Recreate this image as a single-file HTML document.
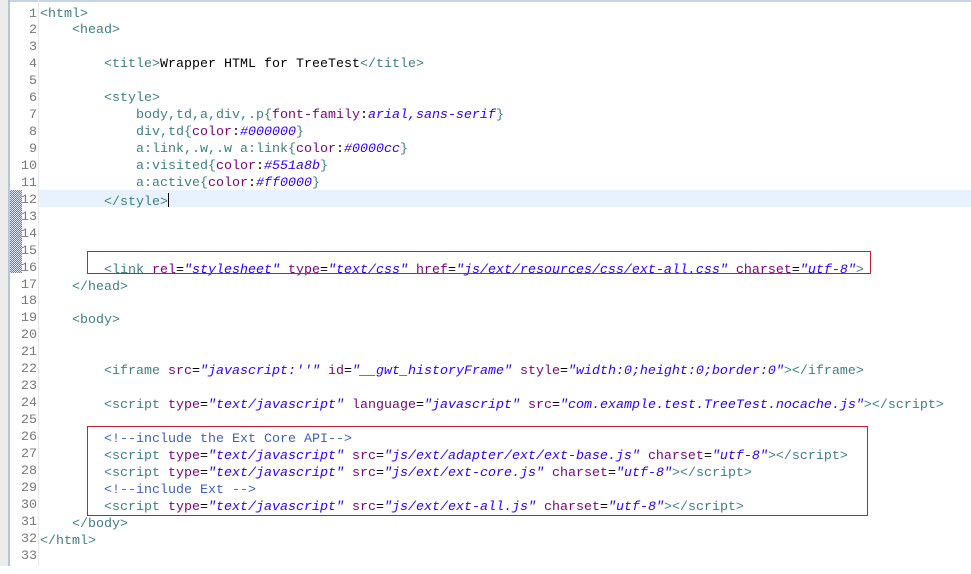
<!DOCTYPE html>
<html><head><style>
body{margin:0;width:971px;height:574px;background:#fff;position:relative;overflow:hidden;font-family:"Liberation Mono",monospace;font-size:13.33px}
.gut{position:absolute;left:0;top:0;width:8px;height:566px;background:#ececec}
.gl{position:absolute;left:8px;top:0;width:2px;height:566px;background:#b8c4d8}
.tb{position:absolute;left:0;top:0;width:971px;height:2px;background:#c6d3e6}
.dots{position:absolute;left:10px;top:190px;width:12px;height:83px;background:repeating-conic-gradient(#5a7fc0 0 25%,#dfe7f5 0 50%) 0 0/2px 2px}
.sep{position:absolute;left:38px;top:0;width:1px;height:566px;background:#e8e8e8}
.cur{position:absolute;left:39px;top:190px;width:932px;height:17px;background:#e8f2fe}
.nums{position:absolute;left:0;top:6.5px;width:37px;text-align:right;color:#787878;line-height:16.94px;white-space:pre}
.code{position:absolute;left:40px;top:6.5px;line-height:16.94px;white-space:pre;color:#000}
.t{color:#3f7f7f}.a{color:#7f007f}.v{color:#2a00ff;font-style:italic}.c{color:#3f5fbf}
.box{position:absolute;border:1px solid #c8202a}
.caret{display:inline-block;width:1px;height:14px;background:#000;vertical-align:-2px}
</style></head><body>
<div class="tb"></div><div class="gut"></div><div class="gl"></div><div class="dots"></div><div class="sep"></div><div class="cur"></div>
<div class="nums">1
2
3
4
5
6
7
8
9
10
11
12
13
14
15
16
17
18
19
20
21
22
23
24
25
26
27
28
29
30
31
32
33</div>
<div class="code"><span class="t">&lt;html&gt;</span>
    <span class="t">&lt;head&gt;</span>

        <span class="t">&lt;title&gt;</span>Wrapper HTML for TreeTest<span class="t">&lt;/title&gt;</span>

        <span class="t">&lt;style&gt;</span>
            <span class="t">body,td,a,div,.p{</span><span class="a">font-family</span>:<span class="v">arial,sans-serif</span><span class="t">}</span>
            <span class="t">div,td{</span><span class="a">color</span>:<span class="v">#000000</span><span class="t">}</span>
            <span class="t">a:link,.w,.w a:link{</span><span class="a">color</span>:<span class="v">#0000cc</span><span class="t">}</span>
            <span class="t">a:visited{</span><span class="a">color</span>:<span class="v">#551a8b</span><span class="t">}</span>
            <span class="t">a:active{</span><span class="a">color</span>:<span class="v">#ff0000</span><span class="t">}</span>
        <span class="t">&lt;/style&gt;</span><span class="caret"></span>



        <span class="t">&lt;link</span> <span class="a">rel</span>=<span class="v">"stylesheet"</span> <span class="a">type</span>=<span class="v">"text/css"</span> <span class="a">href</span>=<span class="v">"js/ext/resources/css/ext-all.css"</span> <span class="a">charset</span>=<span class="v">"utf-8"</span><span class="t">&gt;</span>
    <span class="t">&lt;/head&gt;</span>

    <span class="t">&lt;body&gt;</span>


        <span class="t">&lt;iframe</span> <span class="a">src</span>=<span class="v">"javascript:''"</span> <span class="a">id</span>=<span class="v">"__gwt_historyFrame"</span> <span class="a">style</span>=<span class="v">"width:0;height:0;border:0"</span><span class="t">&gt;&lt;/iframe&gt;</span>

        <span class="t">&lt;script</span> <span class="a">type</span>=<span class="v">"text/javascript"</span> <span class="a">language</span>=<span class="v">"javascript"</span> <span class="a">src</span>=<span class="v">"com.example.test.TreeTest.nocache.js"</span><span class="t">&gt;&lt;/script&gt;</span>

        <span class="c">&lt;!--include the Ext Core API--&gt;</span>
        <span class="t">&lt;script</span> <span class="a">type</span>=<span class="v">"text/javascript"</span> <span class="a">src</span>=<span class="v">"js/ext/adapter/ext/ext-base.js"</span> <span class="a">charset</span>=<span class="v">"utf-8"</span><span class="t">&gt;&lt;/script&gt;</span>
        <span class="t">&lt;script</span> <span class="a">type</span>=<span class="v">"text/javascript"</span> <span class="a">src</span>=<span class="v">"js/ext/ext-core.js"</span> <span class="a">charset</span>=<span class="v">"utf-8"</span><span class="t">&gt;&lt;/script&gt;</span>
        <span class="c">&lt;!--include Ext --&gt;</span>
        <span class="t">&lt;script</span> <span class="a">type</span>=<span class="v">"text/javascript"</span> <span class="a">src</span>=<span class="v">"js/ext/ext-all.js"</span> <span class="a">charset</span>=<span class="v">"utf-8"</span><span class="t">&gt;&lt;/script&gt;</span>
    <span class="t">&lt;/body&gt;</span>
<span class="t">&lt;/html&gt;</span>
</div>
<div class="box" style="left:87px;top:251px;width:782px;height:21px"></div>
<div class="box" style="left:87px;top:426px;width:779px;height:88px"></div>
</body></html>
